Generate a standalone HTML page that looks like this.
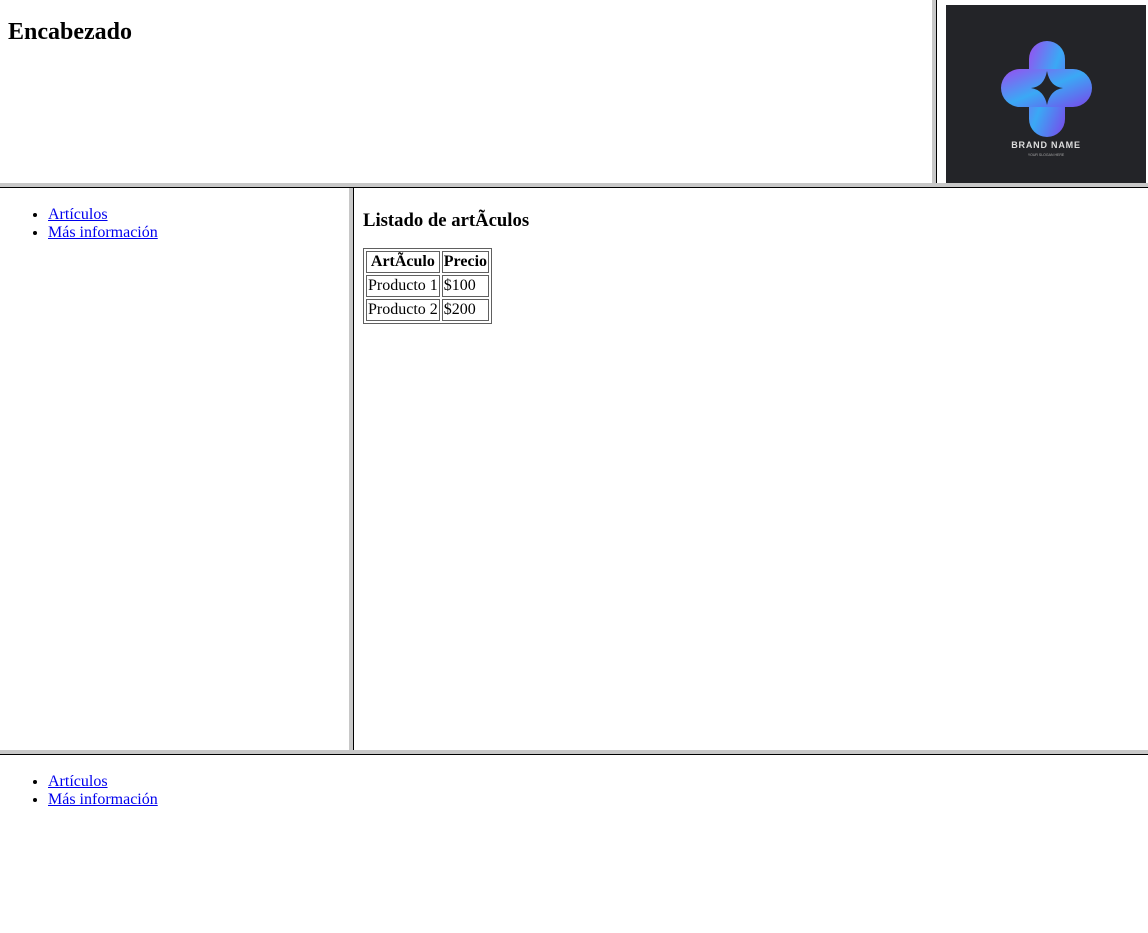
<!DOCTYPE html>
<html><head><meta charset="utf-8"><style>
*{box-sizing:border-box}
body{margin:0;width:1148px;height:933px;position:relative;overflow:hidden;background:#fff;font-family:"Liberation Serif",serif;font-size:16px;color:#000}
.f{position:absolute;overflow:hidden}
.g{position:absolute;background:#c8c8c8}
.d{position:absolute;background:#000}
h2{font-size:24px;margin:0;position:absolute;left:8px;top:19px;font-weight:bold}
h3{font-size:18.7px;margin:0;position:absolute;left:8px;top:22px;font-weight:bold}
ul{margin:0;padding-left:40px;position:absolute;top:18px;left:8px;line-height:18px}
a{color:#00e}
table{position:absolute;left:8px;top:60px;border:1px solid #606060;border-spacing:2px;border-collapse:separate}
td,th{border:1px solid #606060;padding:1px;line-height:18px;font-size:16px}
</style></head><body>
<div class="f" style="left:0;top:0;width:932px;height:183px"><h2>Encabezado</h2></div>
<div class="g" style="left:932px;top:0;width:4px;height:183px"></div>
<div class="d" style="left:936px;top:0;width:1px;height:183px"></div>
<div class="f" style="left:937px;top:0;width:211px;height:183px">
<svg style="position:absolute;left:9px;top:5px" width="200" height="178" viewBox="0 0 200 178">
<defs><linearGradient id="a" x1="0" y1="0" x2="1" y2="1"><stop offset="0" stop-color="#9b4cf0"/><stop offset="0.5" stop-color="#3aa9f5"/><stop offset="1" stop-color="#7a46ea"/></linearGradient></defs>
<rect width="200" height="178" fill="#232428"/>
<rect x="83" y="36" width="36" height="96" rx="18" fill="url(#a)"/>
<rect x="55" y="64" width="91" height="38" rx="19" fill="url(#a)"/>
<path d="M101 66 Q104 82 117 83 Q104 85 101 100 Q98 85 85 83 Q98 82 101 66Z" fill="#232428"/>
<text x="100" y="143" fill="#ddd" font-family="Liberation Sans,sans-serif" font-size="9" font-weight="bold" text-anchor="middle" letter-spacing="0.8">BRAND NAME</text>
<text x="100" y="151" fill="#aaa" font-family="Liberation Sans,sans-serif" font-size="3.5" text-anchor="middle">YOUR SLOGAN HERE</text>
</svg></div>
<div class="g" style="left:0;top:183px;width:1148px;height:4px"></div>
<div class="d" style="left:0;top:187px;width:1148px;height:1px"></div>
<div class="f" style="left:0;top:188px;width:349px;height:562px"><ul><li><a href="#">Artículos</a></li><li><a href="#">Más información</a></li></ul></div>
<div class="g" style="left:349px;top:188px;width:4px;height:562px"></div>
<div class="d" style="left:353px;top:188px;width:1px;height:562px"></div>
<div class="f" style="left:355px;top:188px;width:793px;height:562px">
<h3>Listado de artÃculos</h3>
<table><tr><th>ArtÃculo</th><th>Precio</th></tr><tr><td>Producto 1</td><td>$100</td></tr><tr><td>Producto 2</td><td>$200</td></tr></table>
</div>
<div class="g" style="left:0;top:750px;width:1148px;height:4px"></div>
<div class="d" style="left:0;top:754px;width:1148px;height:1px"></div>
<div class="f" style="left:0;top:755px;width:1148px;height:178px"><ul><li><a href="#">Artículos</a></li><li><a href="#">Más información</a></li></ul></div>
</body></html>
